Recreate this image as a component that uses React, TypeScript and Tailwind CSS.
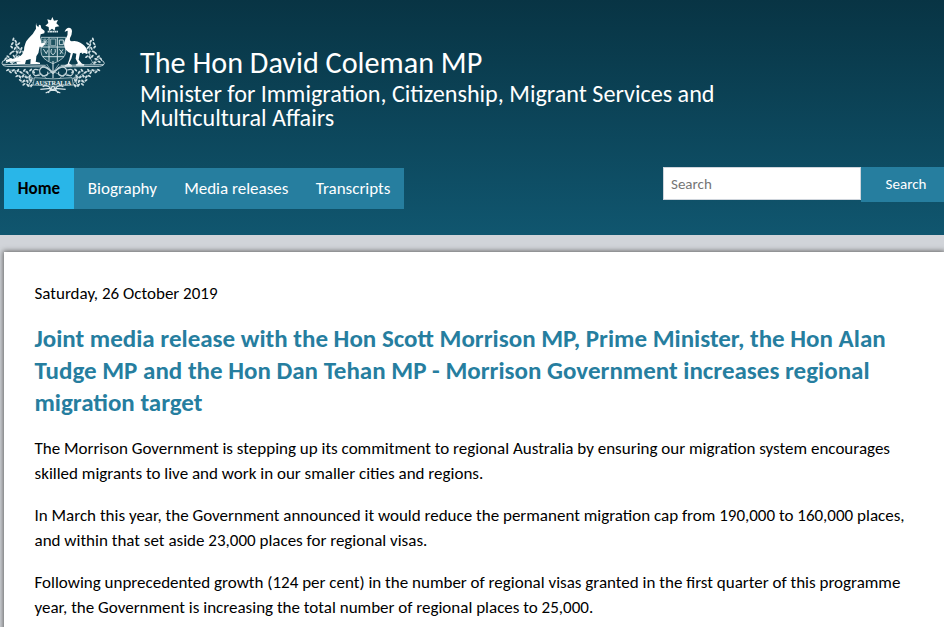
import React from "react";

const navItems = ["Biography", "Media releases", "Transcripts"];

// x, y, rotation of each wattle leaf on the left half of the crest
const leaves = [
    [40, 88, 20], [47, 94, -35], [37, 101, 40], [49, 105, -30], [56, 101, 55], [35, 111, -45],
    [45, 115, 30], [55, 113, -40], [64, 116, 25], [39, 125, 70], [51, 126, -50], [61, 126, 35],
    [70, 127, -25], [32, 130, 45], [24, 140, -60], [17, 146, 45], [31, 147, 80], [42, 139, -35],
    [50, 142, 40], [59, 140, -55], [22, 155, 65], [34, 158, -65], [23, 180, 60], [31, 186, -55],
    [40, 181, 50], [47, 188, -35], [54, 181, 30], [63, 187, -60], [73, 181, 45], [82, 187, -35],
    [92, 180, 50], [101, 186, -45], [51, 198, 60], [60, 201, -35], [69, 198, 30], [79, 202, -65],
    [89, 198, 40], [61, 211, -50], [71, 213, 45], [82, 214, -30], [93, 211, 60], [72, 223, 55],
    [83, 225, -45], [94, 227, 20],
];

function Foliage() {
    return (
        <g>
            <path
                d="M35 165c20-22 19-45 10-75M20 145l28 17M61 115L43 142M22 181c40-5 61 17 78 41M51 198l40 4M70 180l26 22M64 218l30-11"
                fill="none"
                stroke="#b7cdd3"
                strokeWidth="2"
            />
            {leaves.map(([x, y, angle]) => (
                <ellipse
                    key={`${x}-${y}`}
                    cx={x}
                    cy={y}
                    rx="2.8"
                    ry="5.5"
                    transform={`rotate(${angle} ${x} ${y})`}
                    fill="#d0dfe3"
                />
            ))}
        </g>
    );
}

function CoatOfArms() {
    return (
        <svg viewBox="0 0 336 285" className="mt-[10px] h-[95px] w-[112px] shrink-0" aria-label="Australian coat of arms">
            <Foliage />
            <g transform="translate(319 0) scale(-1 1)">
                <Foliage />
            </g>
            <path d="M157 21l5 11 12-2-5 10 9 9-12 2-2 11-8-6-9 7-1-12-10-4 9-8-3-11 11 3z" fill="#fff" />
            <path d="M143 65h31" stroke="#d8e5e8" strokeWidth="5" strokeDasharray="6 1" />
            {/* Shield with the six state badges */}
            <path d="M123 82h74v43q0 22-38 36-36-14-36-36z" fill="#1d5361" stroke="#c3d5da" strokeWidth="2.5" />
            <g fill="none" stroke="#cadbdf" strokeWidth="3">
                <path d="M147 82v71M172 82v71M123 111h74M128 140h64" />
                <path d="M135 86v20M127 96h16M178 90h12v14h-12zM130 117l9 14 4-10M155 117q-6 12 4 17 10-5 6-17M178 118l11 13M189 118l-9 14" />
                <path d="M128 87l15 19M143 87l-15 19M152 87h15v20h-15z" strokeWidth="2" />
            </g>
            {/* Kangaroo */}
            <path
                d="M109 45l6 7 2-8 5 2 2 9 10 8-1 7-11 3-2 10 3 9 1 8 10-2 1 5-8 8-8-1-2 9q0 12-8 20-1 14-2 16l13 3v4H91l1-15-14 4-3 11H50l-1-5 16-3q-36 4-48-2l1-3q22-1 38-8 13-6 16-20 1-23 14-36 12-10 22-29-2-11 1-18z"
                fill="#fff"
            />
            {/* Emu */}
            <path
                d="M194 66q2-11 12-13 10 1 10 11 0 10-6 20-2 9 5 10 13-4 26 4 15 8 19 20 4 8 2 14-13-5-22-3l-4 20 10 12 7 2-1 4h-24l-1-3 7-4-7-14 2-15-10-2-5 17-7 14 9 6-1 4h-22l1-4 9-4 5-14 4-18q-14-6-18-18-5-13 3-25 8-12 6-25l-5 2z"
                fill="#fff"
            />
            {/* Scroll base */}
            <g fill="none" stroke="#c4d5da" strokeWidth="2.8">
                <path d="M15 151q-10 1-9 9 1 9 14 9l121 2 18 17 18-17 122-2q13-1 14-9-1-8-10-9M8 163l129 3M182 166l129-2" />
                <path d="M159 153v52M159 192q-30-36-40-12-2 15 13 18 14-1 11-13M159 192q29-36 41-12 1 15-13 18-14-1-11-13M116 180q-16-6-18 7 1 14 22 8M202 180q17-6 18 7-1 14-22 8" strokeWidth="3.5" />
                <path d="M126 169l66 31M192 169l-66 31M140 162l18 28 19-28M105 198l17-8 19 17M213 198l-17-8-19 17" strokeWidth="2" />
            </g>
            <path d="M103 203q57 7 113 0l4 22q-60 8-121 0z" fill="#174b5b" stroke="#c4d5da" strokeWidth="2.2" />
            <path d="M100 205l-13-2 5 12-8 14 15-4M218 205l14-2-5 12 8 14-15-4" fill="none" stroke="#d3e1e4" strokeWidth="3" />
            <text x="105" y="224" textLength="109" lengthAdjust="spacingAndGlyphs" fill="#f0f6f7" fontSize="20" fontWeight="bold" fontFamily="Liberation Serif, serif">
                AUSTRALIA
            </text>
            <g fill="none" stroke="#d8e5e8" strokeWidth="4">
                <path d="M128 230q13-8 24 5l29 14M190 230q-13-8-24 5l-29 14M121 238l31-3M197 238l-31-3M158 228l-13 21M160 228l14 21" />
            </g>
        </svg>
    );
}

function SiteHeader() {
    return (
        <header className="h-[235px] bg-linear-to-b from-[#083444] to-[#10566f] text-white">
            <div className="flex h-[167px]">
                <CoatOfArms />
                <div className="ml-7 pt-[47px]">
                    <h1 className="text-[30.2px] leading-8">The Hon David Coleman MP</h1>
                    <p className="mt-[3px] w-[600px] text-[24.15px] leading-6">
                        Minister for Immigration, Citizenship, Migrant Services and Multicultural Affairs
                    </p>
                </div>
            </div>
            <div className="flex items-start justify-between pl-1">
                <nav className="mt-px flex h-[41px] bg-[#267e9f] text-[17px] leading-[41px]">
                    <a className="w-[70px] bg-[#29b6e8] text-center font-bold text-black">Home</a>
                    {navItems.map((item) => (
                        <a key={item} className="pr-[13.5px] pl-[13.8px] whitespace-nowrap">
                            {item}
                        </a>
                    ))}
                </nav>
                <form className="flex items-start text-[15px]">
                    <input
                        className="h-[33px] w-[198px] border border-[#cfd5dc] bg-white px-[7px] text-[#757575] placeholder:text-[#757575]"
                        placeholder="Search"
                    />
                    <button type="button" className="h-[35px] w-[83px] bg-[#267e9f] pl-[7px] text-white">
                        Search
                    </button>
                </form>
            </div>
        </header>
    );
}

export default function App() {
    return (
        <div className="h-[627px] w-[944px] overflow-hidden bg-[#d1d4d9] font-['Carlito','Lato',sans-serif]">
            <SiteHeader />
            <main className="mt-[17px] ml-1 h-[400px] bg-white pt-[29px] pl-[30.5px] text-[17px] leading-[25px] whitespace-nowrap text-black shadow-[0_0_5px_1px_#666]">
                <p>Saturday, 26 October 2019</p>
                <h2 className="mt-[17px] text-[25px] leading-8 font-bold text-[#267e9f]">
                    <span className="block">Joint media release with the Hon Scott Morrison MP, Prime Minister, the Hon Alan</span>
                    <span className="block">Tudge MP and the Hon Dan Tehan MP - Morrison Government increases regional</span>
                    <span className="block">migration target</span>
                </h2>
                <p className="mt-[17px]">
                    <span className="block">The Morrison Government is stepping up its commitment to regional Australia by ensuring our migration system encourages</span>
                    <span className="block">skilled migrants to live and work in our smaller cities and regions.</span>
                </p>
                <p className="mt-[17px]">
                    <span className="block">In March this year, the Government announced it would reduce the permanent migration cap from 190,000 to 160,000 places,</span>
                    <span className="block">and within that set aside 23,000 places for regional visas.</span>
                </p>
                <p className="mt-[17px]">
                    <span className="block">Following unprecedented growth (124 per cent) in the number of regional visas granted in the first quarter of this programme</span>
                    <span className="block">year, the Government is increasing the total number of regional places to 25,000.</span>
                </p>
            </main>
        </div>
    );
}
